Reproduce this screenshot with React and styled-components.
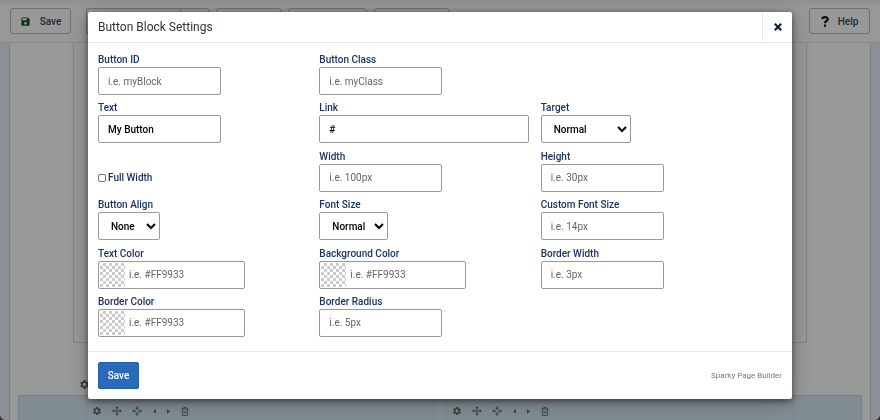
import React from "react";
import styled, { createGlobalStyle, css } from "styled-components";
import { MdSave, MdSettings } from "react-icons/md";

const GlobalStyle = createGlobalStyle`
  *, *::before, *::after { box-sizing: border-box; }
  html, body { margin: 0; background: #333; }
  body {
    font-family: Roboto, "Liberation Sans", sans-serif;
    font-size: 10px;
    color: #132f53;
  }
  button, input, select { font: inherit; margin: 0; }
`;

const Page = styled.div`
  display: flex;
  flex-direction: column;
  height: 100vh;
  min-height: 420px;
  overflow: hidden;
  background: #eceefb;
  border-radius: 0 0 6px 6px;
`;

const Toolbar = styled.header`
  display: flex;
  align-items: center;
  gap: 7px;
  height: 43px;
  padding: 0 10px;
  background: linear-gradient(#eee, #fdfdfd 6px);
  border-bottom: 1px solid #e4e4e8;
`;

const ToolButton = styled.button`
  display: flex;
  align-items: center;
  justify-content: center;
  gap: 9px;
  height: 26px;
  width: ${(p) => p.$width};
  margin-left: ${(p) => (p.$end ? "auto" : 0)};
  margin-right: ${(p) => (p.$apart ? "8px" : 0)};
  padding: 0;
  border: 1px solid #bbb;
  border-radius: 3px;
  background: transparent;
  color: #3f4750;
  font-weight: 500;
`;

const SplitButton = styled.div`
  display: flex;
  > button:first-child { border-radius: 3px 0 0 3px; border-right: 0; }
  > button:last-child { border-radius: 0 3px 3px 0; }
`;

const Canvas = styled.main`
  flex: 1;
  display: flex;
  flex-direction: column;
  margin: 0 9px;
  padding: 0 8px;
  background: #fff;
  border: solid #d3d6e6;
  border-width: 0 1px;
`;

const Section = styled.section`
  height: 300px;
  margin: 0 55px;
  border: 1px solid #dadada;
  border-top: 0;
`;

const SectionTools = styled.div`
  display: flex;
  flex: none;
  height: 52px;
  padding: 35px 60px 0;
`;

const BlockRow = styled.div`
  flex: 1;
  display: flex;
  gap: 12px;
  padding: 0 67px;
  background: #d8eaf6;
  border: 1px solid #c3d7e2;
  border-bottom: 0;
`;

const BlockColumn = styled.div`
  flex: 1;
  display: flex;
  align-items: flex-start;
  gap: 8px;
  padding: 9px 4px 0;
  border: solid #ccdfe9;
  border-width: 0 1px;
`;

const GhostButton = styled.button`
  display: flex;
  align-items: center;
  justify-content: center;
  width: ${(p) => (p.$slim ? "6px" : "12px")};
  height: 12px;
  padding: 0;
  border: 0;
  background: none;
  color: #6b6b6b;
`;

const Backdrop = styled.div`
  position: fixed;
  inset: 0;
  display: flex;
  justify-content: center;
  padding: 12px 10% 21px;
  background: rgba(0, 0, 0, 0.4);
  border-radius: 0 0 6px 6px;
`;

const Dialog = styled.form`
  display: flex;
  flex-direction: column;
  width: 100%;
  min-height: 387px;
  background: #fff;
  border-radius: 2px;
  box-shadow: 0 2px 6px rgba(0, 0, 0, 0.5), 0 4px 24px rgba(0, 0, 0, 0.25);
`;

const DialogHeader = styled.div`
  display: flex;
  align-items: center;
  justify-content: space-between;
  height: 31px;
  padding-left: 10px;
  border-bottom: 1px solid #e6e6e6;
`;

const DialogTitle = styled.h1`
  margin: 0;
  font-size: 12px;
  line-height: 16px;
  font-weight: 400;
  color: #2b333d;
`;

const CloseButton = styled.button`
  display: flex;
  align-items: center;
  justify-content: center;
  width: 30px;
  height: 28px;
  padding: 0;
  border: 0;
  border-left: 1px solid #e8e8e8;
  background: none;
  color: #101d33;
`;

const Fields = styled.div`
  flex: 1;
  display: grid;
  grid-template-columns: repeat(3, minmax(0, 1fr));
  gap: 0 12px;
  align-content: space-between;
  padding: 9px 42px 14px 10px;
`;

const FieldBox = styled.div`
  display: flex;
  flex-direction: column;
  align-items: flex-start;
`;

const Label = styled.label`
  line-height: 15px;
  font-weight: 500;
  color: #1c3560;
`;

const control = css`
  height: 28px;
  border: 1px solid #999;
  border-radius: 2px;
  background: #fff;
  color: #000;
`;

const TextInput = styled.input`
  ${control}
  width: ${(p) => (p.$wide ? "100%" : "123px")};
  padding: 0 9px;
  font-weight: 500;
  &::placeholder { color: #666; font-weight: 400; opacity: 1; }
`;

const Select = styled.select`
  ${control}
  width: ${(p) => p.$width};
  padding: 0 0 0 8px;
  font-weight: 500;
`;

const ColorBox = styled.div`
  ${control}
  display: flex;
  align-items: center;
  gap: 4px;
  width: 147px;
  padding: 0 1px;
`;

const Swatch = styled.button`
  flex: none;
  width: 25px;
  height: 24px;
  padding: 0;
  border: 0;
  background: repeating-conic-gradient(#ccc 0 25%, #fff 0 50%) 0 0 / 6px 6px;
`;

const ColorInput = styled.input`
  flex: 1;
  min-width: 0;
  padding: 0;
  border: 0;
  outline: 0;
  background: none;
  &::placeholder { color: #666; opacity: 1; }
`;

const CheckField = styled.div`
  display: flex;
  align-items: center;
  gap: 2px;
  padding-top: 15px;
`;

const Checkbox = styled.input`
  appearance: none;
  width: 8px;
  height: 8px;
  border: 1px solid #777;
  border-radius: 2px;
  background: #fff;
  &:checked { background: #2b68b8; }
`;

const DialogFooter = styled.div`
  display: flex;
  align-items: center;
  justify-content: space-between;
  height: 48px;
  padding: 0 10px;
  border-top: 1px solid #e8e8e8;
`;

const SubmitButton = styled.button`
  width: 41px;
  height: 27px;
  padding: 0;
  border: 1px solid #2460ac;
  border-radius: 2px;
  background: #2b69b9;
  color: #fff;
  font-weight: 500;
`;

const Credit = styled.span`
  font-size: 8px;
  line-height: 12px;
  color: #777;
`;

const MoveIcon = () => (
  <svg width="10" height="10" viewBox="0 0 22 22" fill="currentColor">
    <path d="M10 5h2v5h5v2h-5v5h-2v-5H5v-2h5zM11 0l4 5H7zM11 22l-4-5h8zM0 11l5-4v8zM22 11l-5 4V7z" />
  </svg>
);

const TargetIcon = () => (
  <svg width="10" height="10" viewBox="0 0 22 22" fill="currentColor">
    <path d="M10 0h2v4h3l-4 5-4-5h3zM10 22h2v-4h3l-4-5-4 5h3zM0 10v2h4v3l5-4-5-4v3zM22 10v2h-4v3l-5-4 5-4v3z" />
  </svg>
);

const CaretIcon = ({ right }) => (
  <svg width="3" height="5" viewBox="0 0 4 6" fill="currentColor">
    <path d={right ? "M0 0l4 3-4 3z" : "M4 0L0 3l4 3z"} />
  </svg>
);

const TrashIcon = () => (
  <svg width="8" height="9" viewBox="0 0 18 20" fill="none" stroke="currentColor" strokeWidth="2">
    <path d="M1 4h16M6 4V1h6v3M3 4v15h12V4M7 8v7M11 8v7" />
  </svg>
);

const CloseIcon = () => (
  <svg width="8" height="8" viewBox="0 0 8 8" stroke="currentColor" strokeWidth="2.2">
    <path d="M.8.8l6.4 6.4M7.2.8L.8 7.2" />
  </svg>
);

const HelpIcon = () => (
  <svg width="8" height="11" viewBox="0 0 8 11" fill="none" stroke="#0d1528" strokeWidth="2.2">
    <path d="M1.2 3.2C1.5.6 6.7.4 6.7 3.2 6.7 5.1 4 4.9 4 7.3M4 8.5v2.3" />
  </svg>
);

function Field({ id, label, placeholder, value, wide }) {
  return (
    <FieldBox>
      <Label htmlFor={id}>{label}</Label>
      <TextInput id={id} type="text" placeholder={placeholder} defaultValue={value} $wide={wide} />
    </FieldBox>
  );
}

function SelectField({ id, label, options, width }) {
  return (
    <FieldBox>
      <Label htmlFor={id}>{label}</Label>
      <Select id={id} $width={width}>
        {options.map((o) => <option key={o}>{o}</option>)}
      </Select>
    </FieldBox>
  );
}

function ColorField({ id, label }) {
  return (
    <FieldBox>
      <Label htmlFor={id}>{label}</Label>
      <ColorBox>
        <Swatch type="button" aria-label={`Pick ${label}`} />
        <ColorInput id={id} type="text" placeholder="i.e. #FF9933" />
      </ColorBox>
    </FieldBox>
  );
}

function ColumnTools() {
  return (
    <BlockColumn>
      <GhostButton aria-label="Settings"><MdSettings size={10} /></GhostButton>
      <GhostButton aria-label="Move"><MoveIcon /></GhostButton>
      <GhostButton aria-label="Center"><TargetIcon /></GhostButton>
      <GhostButton $slim aria-label="Left"><CaretIcon /></GhostButton>
      <GhostButton $slim aria-label="Right"><CaretIcon right /></GhostButton>
      <GhostButton aria-label="Delete"><TrashIcon /></GhostButton>
    </BlockColumn>
  );
}

export default function App() {
  return (
    <>
      <GlobalStyle />
      <Page>
        <Toolbar>
          <ToolButton $width="61px" $apart><MdSave size={11} color="#0d5c1c" />Save</ToolButton>
          <SplitButton>
            <ToolButton $width="94px" aria-label="Preset" />
            <ToolButton $width="29px" aria-label="Preset menu" />
          </SplitButton>
          <ToolButton $width="65px" aria-label="Undo" />
          <ToolButton $width="79px" aria-label="Redo" />
          <ToolButton $width="75px" aria-label="Preview" />
          <ToolButton $width="61px" $end><HelpIcon />Help</ToolButton>
        </Toolbar>
        <Canvas>
          <Section />
          <SectionTools>
            <GhostButton aria-label="Section settings"><MdSettings size={11} /></GhostButton>
          </SectionTools>
          <BlockRow>
            <ColumnTools />
            <ColumnTools />
          </BlockRow>
        </Canvas>
      </Page>
      <Backdrop>
        <Dialog role="dialog" aria-labelledby="title" onSubmit={(e) => e.preventDefault()}>
          <DialogHeader>
            <DialogTitle id="title">Button Block Settings</DialogTitle>
            <CloseButton type="button" aria-label="Close"><CloseIcon /></CloseButton>
          </DialogHeader>
          <Fields>
            <Field id="bid" label="Button ID" placeholder="i.e. myBlock" />
            <Field id="bclass" label="Button Class" placeholder="i.e. myClass" />
            <span />
            <Field id="text" label="Text" value="My Button" />
            <Field id="link" label="Link" value="#" wide />
            <SelectField id="target" label="Target" options={["Normal", "New Tab"]} width="90px" />
            <CheckField>
              <Checkbox id="full" type="checkbox" />
              <Label htmlFor="full">Full Width</Label>
            </CheckField>
            <Field id="width" label="Width" placeholder="i.e. 100px" />
            <Field id="height" label="Height" placeholder="i.e. 30px" />
            <SelectField id="align" label="Button Align" options={["None", "Left", "Right"]} width="62px" />
            <SelectField id="fsize" label="Font Size" options={["Normal", "Large"]} width="69px" />
            <Field id="cfsize" label="Custom Font Size" placeholder="i.e. 14px" />
            <ColorField id="tcolor" label="Text Color" />
            <ColorField id="bgcolor" label="Background Color" />
            <Field id="bwidth" label="Border Width" placeholder="i.e. 3px" />
            <ColorField id="bcolor" label="Border Color" />
            <Field id="bradius" label="Border Radius" placeholder="i.e. 5px" />
          </Fields>
          <DialogFooter>
            <SubmitButton type="submit">Save</SubmitButton>
            <Credit>Sparky Page Builder</Credit>
          </DialogFooter>
        </Dialog>
      </Backdrop>
    </>
  );
}
